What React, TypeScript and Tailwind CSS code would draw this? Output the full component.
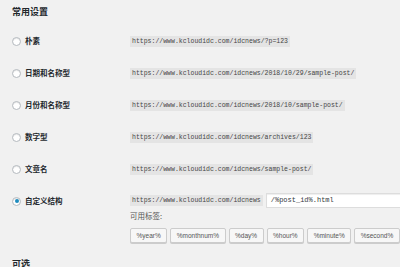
import React from 'react'

const cjk = { fontFamily: '"Noto Sans CJK SC", "Noto Sans", sans-serif' }
const mono = { fontFamily: '"Liberation Mono", "DejaVu Sans Mono", monospace' }

const rows = [
  { label: '朴素', url: 'https://www.kcloudidc.com/idcnews/?p=123' },
  { label: '日期和名称型', url: 'https://www.kcloudidc.com/idcnews/2018/10/29/sample-post/' },
  { label: '月份和名称型', url: 'https://www.kcloudidc.com/idcnews/2018/10/sample-post/' },
  { label: '数字型', url: 'https://www.kcloudidc.com/idcnews/archives/123' },
  { label: '文章名', url: 'https://www.kcloudidc.com/idcnews/sample-post/' },
]

const tags = ['%year%', '%monthnum%', '%day%', '%hour%', '%minute%', '%second%']

const Radio = ({ checked }: { checked?: boolean }) => (
  <span className="flex w-[9px] h-[9px] shrink-0 items-center justify-center rounded-full border border-[#b4b9be] bg-white shadow-[inset_0_1px_1px_rgba(0,0,0,0.1)]">
    {checked && <span className="w-[4px] h-[4px] rounded-full bg-[#1e8cbe]" />}
  </span>
)

const Code = ({ children }: { children: React.ReactNode }) => (
  <span
    className="inline-block shrink-0 px-[2px] h-[11px] leading-[11px] text-[6.5px] text-[#444] bg-[#e4e4e4] whitespace-nowrap"
    style={mono}
  >
    {children}
  </span>
)

export default function App() {
  return (
    <div className="w-[400px] h-[267px] overflow-hidden bg-[#f1f1f1] pl-[12px]" style={cjk}>
      <h2 className="pt-[6px] mb-[7px] text-[9px] leading-[12px] font-semibold text-[#23282d]">常用设置</h2>
      {rows.map((row) => (
        <div key={row.label} className="flex items-center h-[32px]">
          <label className="flex shrink-0 items-center gap-[4px] w-[118px] text-[7.5px] font-semibold text-[#23282d]">
            <Radio />
            {row.label}
          </label>
          <Code>{row.url}</Code>
        </div>
      ))}
      <div className="flex pt-[8px]">
        <label className="flex shrink-0 items-center h-[16px] gap-[4px] w-[118px] text-[7.5px] font-semibold text-[#23282d]">
          <Radio checked />
          自定义结构
        </label>
        <div className="flex flex-col">
          <div className="flex items-center gap-[3px] h-[15px]">
            <Code>https://www.kcloudidc.com/idcnews</Code>
            <div
              className="shrink-0 w-[200px] h-[15px] leading-[13px] pl-[4px] bg-white border border-[#ddd] shadow-[inset_0_1px_1px_rgba(0,0,0,0.07)] text-[7px] text-[#32373c]"
              style={mono}
            >
              /%post_id%.html
            </div>
          </div>
          <p className="mt-[1px] h-[14px] leading-[14px] text-[7.5px] text-[#555]">可用标签:</p>
          <div className="flex gap-[3px] mt-[5px]">
            {tags.map((t) => (
              <span
                key={t}
                className="shrink-0 h-[15px] leading-[13px] px-[5.5px] border border-[#ccc] rounded-[2px] bg-[#f7f7f7] shadow-[0_1px_0_#ccc] text-[6.5px] text-[#555] whitespace-nowrap"
                style={{ fontFamily: '"Liberation Sans", Arial, sans-serif' }}
              >
                {t}
              </span>
            ))}
          </div>
        </div>
      </div>
      <h2 className="mt-[15px] text-[9px] leading-[12px] font-semibold text-[#23282d]">可选</h2>
    </div>
  )
}
